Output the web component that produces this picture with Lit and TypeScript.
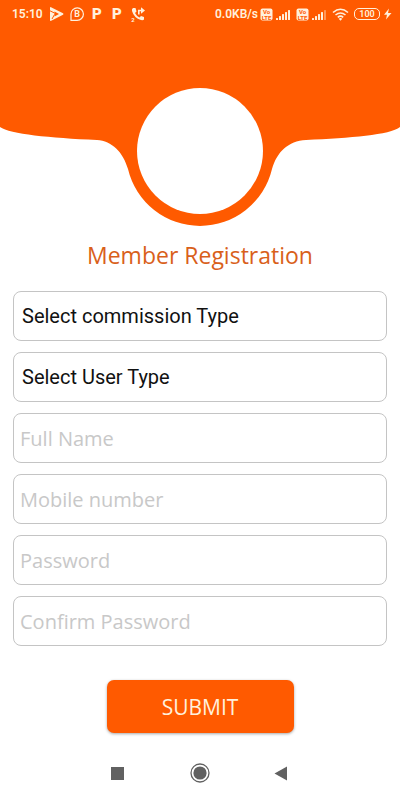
import { LitElement, html, css, svg } from "lit";
import { customElement } from "lit/decorators.js";

@customElement("status-bar")
class StatusBar extends LitElement {
  static styles = css`
    :host {
      display: block;
      background: #ff5a00;
      color: #fff0dc;
      font-family: Roboto, "Liberation Sans", sans-serif;
    }
    .bar {
      display: flex;
      justify-content: space-between;
      align-items: center;
      height: 28px;
      padding: 0 8px 0 12px;
    }
    .side {
      display: flex;
      align-items: center;
    }
    .text {
      font-size: 12px;
      line-height: 16px;
      font-weight: 600;
    }
    .apps {
      display: flex;
      align-items: center;
      gap: 6px;
      margin-left: 6px;
    }
    .sim {
      display: flex;
      align-items: center;
      gap: 2px;
      margin-left: 2px;
    }
    .sim + .sim {
      margin-left: 5px;
    }
    .wifi {
      margin-left: 5px;
    }
    .battery {
      box-sizing: border-box;
      width: 26px;
      height: 12px;
      margin: 0 3px 0 5px;
      border: 1px solid currentColor;
      border-radius: 5px;
      font-size: 9px;
      line-height: 10px;
      font-weight: 600;
      text-align: center;
    }
    svg {
      display: block;
      fill: currentColor;
    }
    svg text {
      font-family: Roboto, "Liberation Sans", sans-serif;
      font-weight: 700;
      text-anchor: middle;
    }
    .p {
      font-size: 15px;
      font-weight: 900;
    }
    .b {
      font-size: 9px;
    }
    .lte {
      font-size: 6px;
      fill: #ff5a00;
    }
    .tiny {
      font-size: 6px;
    }
    .line {
      fill: none;
      stroke: currentColor;
    }
    .faint {
      opacity: 0.4;
    }
  `;

  private pay() {
    return html`<svg width="14" height="16" viewBox="0 0 14 16">
      <text class="p" x="7" y="13">P</text>
    </svg>`;
  }

  private sim(full: boolean) {
    return html`<span class="sim">
      <svg width="13" height="13" viewBox="0 0 13 13">
        <rect x="0.5" y="0.5" width="12" height="12" rx="2" />
        <text class="lte" x="6.5" y="6">Vo</text>
        <text class="lte" x="6.5" y="12">LTE</text>
      </svg>
      <svg width="16" height="12" viewBox="0 0 16 12">
        ${[2, 4, 6, 8, 10].map(
          (h, i) => svg`<rect class=${!full && i === 4 ? "faint" : ""}
            x=${i * 3 + 1} y=${12 - h} width="2" height=${h} rx="0.5" />`
        )}
      </svg>
    </span>`;
  }

  render() {
    return html`<div class="bar">
      <div class="side">
        <span class="text">15:10</span>
        <span class="apps">
          <svg width="15" height="16" viewBox="0 0 15 16">
            <path
              d="M2 1.200 Q1 0.800 1 2 V14 Q1 15.300 2.200 14.800 L14 8.800 Q15 8 14 7.300 Z"
            />
            <path d="M5.500 5.500 L10 8 L5.500 10.500 Z" fill="#ff5a00" />
            <path d="M1 4.800 L5.800 7.200 M5.500 8.500 L3 13" fill="none" stroke="#ff5a00" />
          </svg>
          <svg width="14" height="16" viewBox="0 0 14 16">
            <path
              class="line"
              stroke-width="1.200"
              d="M1 14.300 V8 A6.200 6.200 0 1 1 7.200 14.300 Z"
            />
            <text class="b" x="7" y="11.200">B</text>
          </svg>
          ${this.pay()} ${this.pay()}
          <svg width="16" height="16" viewBox="0 0 16 16">
            <path
              d="M3 2 L5.500 2 L6.500 5.500 L5 7 Q6.500 10 9.500 11.500 L11 10 L14 11 V13.500 Q13 14.500 11 14 Q4 12 2 5 Q1.500 3 3 2 Z"
            />
            <path
              class="line"
              stroke-width="1.600"
              d="M8.800 8.500 V4.500 H12"
            />
            <path d="M11 1.200 L15 4.500 L11 7.800 Z" />
            <text class="tiny" x="3" y="15.500">2</text>
          </svg>
        </span>
      </div>
      <div class="side">
        <span class="text">0.0KB/s</span>
        ${this.sim(true)} ${this.sim(false)}
        <svg class="wifi" width="17" height="13" viewBox="0 0 17 13">
          <path
            class="line"
            stroke-width="1.6"
            d="M1 4.500 Q8.500 -2 16 4.500 M3.500 7 Q8.500 3 13.500 7 M5.800 9.300 Q8.500 7 11.200 9.300"
          />
          <path d="M6.700 10.700 Q8.500 9.500 10.300 10.700 L8.500 12.700 Z" />
        </svg>
        <span class="battery">100</span>
        <svg width="9" height="12" viewBox="0 0 9 12">
          <path d="M6 0.500 L1 6.800 H4 L3 11.500 L8.500 5 H5 Z" />
        </svg>
      </div>
    </div>`;
  }
}

@customElement("hero-banner")
class HeroBanner extends LitElement {
  static styles = css`
    :host {
      display: block;
    }
    svg {
      display: block;
      width: 100%;
    }
  `;

  render() {
    return html`<svg viewBox="0 28 400 200" aria-hidden="true">
      <path
        fill="#ff5a00"
        d="M0 28 H400 V127 C390 135 350 138 306 140 C288 141 277 152 272 169 A74 74 0 0 1 128 169 C123 152 112 141 97 140 C50 138 10 134 0 127 Z"
      />
      <circle cx="200" cy="151" r="63" fill="#fff" />
    </svg>`;
  }
}

@customElement("nav-bar")
class NavBar extends LitElement {
  static styles = css`
    :host {
      display: block;
    }
    .bar {
      display: grid;
      grid-template-columns: 1fr 58px 24px 58px 1fr;
      align-items: center;
    }
    button {
      width: 24px;
      height: 24px;
      padding: 0;
      border: 0;
      background: none;
    }
    .recent {
      justify-self: end;
      grid-column: 1;
    }
    .home {
      grid-column: 3;
    }
    .back {
      grid-column: 5;
    }
    svg {
      display: block;
      fill: #616161;
    }
  `;

  render() {
    return html`<nav class="bar">
      <button class="recent" aria-label="Recent apps">
        <svg width="24" height="24"><rect x="5" y="6" width="13" height="13" /></svg>
      </button>
      <button class="home" aria-label="Home">
        <svg width="24" height="24">
          <circle cx="12" cy="12" r="9" fill="none" stroke="#616161" stroke-width="1.3" />
          <circle cx="12" cy="12" r="6.600" />
        </svg>
      </button>
      <button class="back" aria-label="Back">
        <svg width="24" height="24"><path d="M4.500 12.500 L17 5.500 V19.500 Z" /></svg>
      </button>
    </nav>`;
  }
}

@customElement("app-root")
class AppRoot extends LitElement {
  static styles = css`
    :host {
      display: flex;
      flex-direction: column;
      min-height: 100vh;
      background: #fff;
      font-family: "Open Sans", "Noto Sans", sans-serif;
    }
    h1 {
      margin: 11px 0 20px;
      color: #d9601a;
      font-size: 23px;
      line-height: 32px;
      font-weight: 400;
      text-align: center;
    }
    form {
      display: flex;
      flex-direction: column;
      gap: 11px;
      padding: 0 13px;
    }
    .field {
      box-sizing: border-box;
      width: 100%;
      height: 50px;
      margin: 0;
      padding: 0 6px;
      border: 1px solid #c4c4c4;
      border-radius: 8px;
      background: #fff;
      color: #111;
      font-family: inherit;
      font-size: 20px;
    }
    .field::placeholder {
      color: #c8c8c8;
      opacity: 1;
    }
    select.field {
      appearance: none;
      padding: 0 8px;
      font-family: Roboto, "Liberation Sans", sans-serif;
    }
    .submit {
      align-self: center;
      width: 50%;
      height: 53px;
      margin-top: 23px;
      border: 0;
      border-radius: 7px;
      background: #ff5a00;
      box-shadow: 0 1px 3px rgba(0, 0, 0, 0.35);
      color: #fff0dc;
      font-family: inherit;
      font-size: 21px;
    }
    nav-bar {
      margin-top: auto;
      padding-bottom: 15px;
    }
  `;

  private selects = ["Select commission Type", "Select User Type"];
  private inputs = [
    { label: "Full Name", type: "text" },
    { label: "Mobile number", type: "tel" },
    { label: "Password", type: "password" },
    { label: "Confirm Password", type: "password" },
  ];

  render() {
    return html`
      <status-bar></status-bar>
      <hero-banner></hero-banner>
      <h1>Member Registration</h1>
      <form @submit=${(e: Event) => e.preventDefault()}>
        ${this.selects.map(
          (s) => html`<select class="field" aria-label=${s}>
            <option>${s}</option>
          </select>`
        )}
        ${this.inputs.map(
          (f) => html`<input
            class="field"
            type=${f.type}
            placeholder=${f.label}
            aria-label=${f.label}
          />`
        )}
        <button class="submit" type="submit">SUBMIT</button>
      </form>
      <nav-bar></nav-bar>
    `;
  }
}
